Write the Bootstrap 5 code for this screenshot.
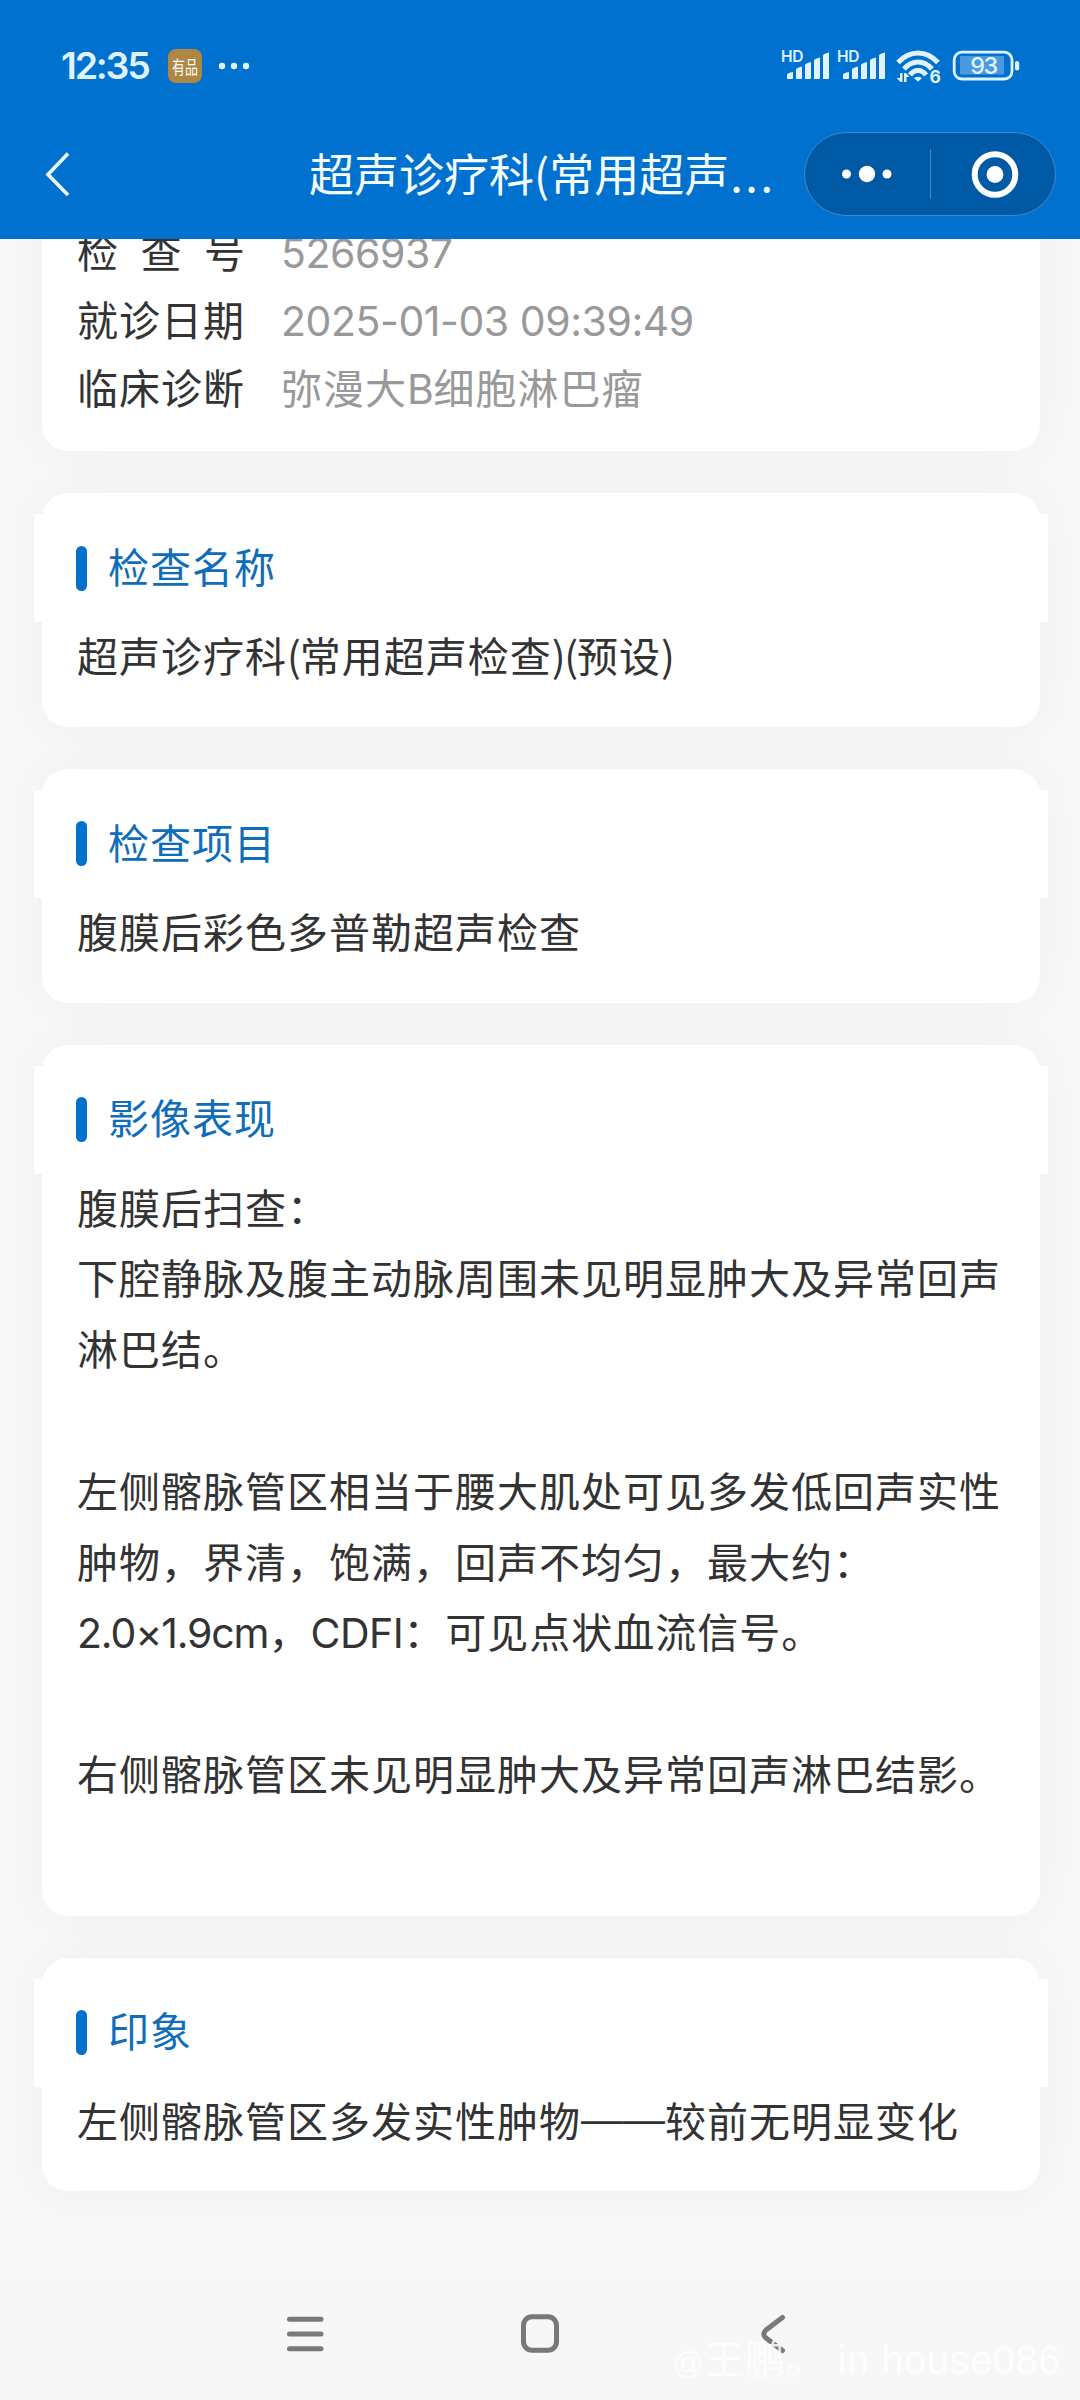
<!DOCTYPE html>
<html lang="zh-CN">
<head>
<meta charset="utf-8">
<meta name="viewport" content="width=device-width, initial-scale=1">
<title>超声诊疗科</title>
<link href="https://cdn.jsdelivr.net/npm/bootstrap@5.3.0/dist/css/bootstrap.min.css" rel="stylesheet">
<style>
body{width:1080px;height:2400px;overflow:hidden;background:#f8f8f8;color:#333;font-family:"Noto Sans CJK SC",sans-serif;font-size:41px;letter-spacing:1px}
.lat{font-family:Inter,"Noto Sans",sans-serif;line-height:1;letter-spacing:-.45px}
.lat-size{letter-spacing:-1.15px}
.app-head{height:239px;background:#0071cf;z-index:2}
.status-row{height:132px;padding:0 60px 0 61px;color:#dff3ff}
.clock{font-size:37.5px;font-weight:600;letter-spacing:-2.2px;width:107px}
.shop-tag{width:34px;height:34px;border-radius:8px;background:#ae8745;color:#fff;overflow:hidden}
.shop-tag span{font-size:13px;line-height:1;letter-spacing:0;transform:scaleY(1.4)}
.title-row{height:84px;padding:0 24px 0 44px}
.page-title{font-size:45px;letter-spacing:0;line-height:82px;height:84px;color:#f4feff;width:495px;margin-left:238px}
.page-title span{letter-spacing:2.6px;margin-left:1px}
.capsule{width:252px;height:84px;border-radius:42px;background:#0059a5;border:1px solid #3f88c6}
.scroller{height:2037px;padding:0 40px 0 42px}
.panel{background:#fff;border-radius:26px;box-shadow:0 0 50px rgba(0,0,0,.045);margin-bottom:42px;padding:21px 0 34px}
.panel-info{margin-top:-60px;padding:40px 35px 28px}
.info-row{height:68px;line-height:62px}
.info-label{width:169px}
.info-value{color:#999;margin-left:35px}
.strip{height:108px;margin:0 -8px;padding:0 42px;background:#fff;color:#0f6dba}
.strip span{padding-bottom:5px}
.tick{width:11px;height:45px;border-radius:6px;background:#0071cf;margin-right:21px}
.report{line-height:70.8px;padding:0 35px;white-space:pre-line;margin-top:-3px;margin-bottom:3px}
.par{letter-spacing:-1.2px}
.dash{font-family:"Liberation Sans",sans-serif;font-size:42px;letter-spacing:0;line-height:0;vertical-align:4px}
.nav-sys{height:124px;background:#f7f7f7}
.stamp{right:19px;bottom:8px;color:#fff;opacity:.85;font-family:"Liberation Sans","Noto Sans CJK SC",sans-serif;font-size:40px;line-height:56px;letter-spacing:.5px;white-space:pre}
.stamp span{font-size:31px}
</style>
<script src="https://cdn.jsdelivr.net/npm/bootstrap@5.3.0/dist/js/bootstrap.bundle.min.js"></script>
</head>
<body class="position-relative">
<header class="app-head position-relative">
  <div class="status-row d-flex align-items-center">
    <div class="clock lat">12:35</div>
    <div class="shop-tag d-flex align-items-center justify-content-center"><span>有品</span></div>
    <svg class="ms-3" width="34" height="10" fill="#dff3ff"><circle cx="4" cy="5" r="3.2"/><circle cx="16" cy="5" r="3.2"/><circle cx="28" cy="5" r="3.2"/></svg>
    <svg class="ms-auto" width="240" height="40" viewBox="780 46 240 40" fill="#dff3ff">
      <defs><g id="sig"><text x="781" y="62" font-family="Inter" font-size="15.5" font-weight="600" letter-spacing="-.2">HD</text>
      <path d="M787 79v-4q0-2 6-3v6q0 1-1 1zM796 79V69.500q0-1.500 6-3v11.500q0 1-1 1zM805 79V65q0-1.500 6-3v16q0 1-1 1zM814 79V60.500q0-1.500 6-3v20.500q0 1-1 1zM823 79V55.500q0-1.500 6-3v25.500q0 1-1 1z"/></g></defs>
      <use href="#sig"/><use href="#sig" x="56"/>
      <g fill="none" stroke="#dff3ff" stroke-width="5"><path d="M898 62.500Q907 53 918 53T938 62.500"/><path d="M904 69Q910 62 918 62T932 69"/><path d="M910 75Q913 70.500 918 70.500T926 75"/></g>
      <path d="M914 78q4-2.500 8 0l-4 3.700z"/>
      <path d="M902.500 73v9h-2l-4-4h3.500v-5zM904 82v-9h2l3.500 4h-3v5z"/>
      <text x="929.500" y="82.500" font-family="Inter" font-size="17.500" font-weight="700" stroke="#0071cf" stroke-width="3" paint-order="stroke">6</text>
      <rect x="954.200" y="52.200" width="57.800" height="26.800" rx="7.500" fill="none" stroke="#dff3ff" stroke-width="2.800"/>
      <rect x="960" y="56" width="44" height="18.500" rx="1" fill="#4b9ae0"/>
      <rect x="1015" y="61" width="4.200" height="9.500" rx="2"/>
      <text x="983.500" y="74.300" text-anchor="middle" font-family="Inter" font-size="23.500" font-weight="500" letter-spacing="-1.500">93</text>
    </svg>
  </div>
  <div class="title-row d-flex align-items-center">
    <svg width="27" height="48" fill="none" stroke="#effcff" stroke-width="3.600"><path d="M24 3.500 4 24.500 24 45"/></svg>
    <div class="page-title text-nowrap">超声诊疗科(常用超声<span>...</span></div>
    <div class="capsule d-flex">
      <svg width="250" height="82" fill="#fff"><circle cx="41.500" cy="41" r="4.500"/><circle cx="62" cy="41" r="8.200"/><circle cx="82" cy="41" r="4.500"/><path d="M125.500 16v50" stroke="#3f88c6"/><circle cx="190" cy="41.500" r="20.300" fill="none" stroke="#fff" stroke-width="6"/><circle cx="190" cy="41.500" r="8.400"/></svg>
    </div>
  </div>
</header>
<main class="scroller overflow-hidden d-flex flex-column">
  <section class="panel panel-info">
    <div class="info-row d-flex"><div class="info-label d-flex justify-content-between"><span>检</span><span>查</span><span>号</span></div><div class="info-value"><span class="lat">5266937</span></div></div>
    <div class="info-row d-flex"><div class="info-label">就诊日期</div><div class="info-value"><span class="lat">2025-01-03 09:39:49</span></div></div>
    <div class="info-row d-flex"><div class="info-label">临床诊断</div><div class="info-value">弥漫大<span class="lat">B</span>细胞淋巴瘤</div></div>
  </section>
  <section class="panel">
    <div class="strip d-flex align-items-center"><i class="tick"></i><span>检查名称</span></div>
    <div class="report">超声诊疗科<span class="par">(</span>常用超声检查<span class="par">)(</span>预设<span class="par">)</span></div>
  </section>
  <section class="panel">
    <div class="strip d-flex align-items-center"><i class="tick"></i><span>检查项目</span></div>
    <div class="report">腹膜后彩色多普勒超声检查</div>
  </section>
  <section class="panel">
    <div class="strip d-flex align-items-center"><i class="tick"></i><span>影像表现</span></div>
    <div class="report">腹膜后扫查：
下腔静脉及腹主动脉周围未见明显肿大及异常回声
淋巴结。

左侧髂脉管区相当于腰大肌处可见多发低回声实性
肿物，界清，饱满，回声不均匀，最大约：
<span class="lat lat-size">2.0×1.9cm</span>，<span class="lat">CDFI</span>：可见点状血流信号。

右侧髂脉管区未见明显肿大及异常回声淋巴结影。
&nbsp;</div>
  </section>
  <section class="panel">
    <div class="strip d-flex align-items-center"><i class="tick"></i><span>印象</span></div>
    <div class="report">左侧髂脉管区多发实性肿物<span class="dash">——</span>较前无明显变化</div>
  </section>
</main>
<nav class="nav-sys">
  <svg width="1080" height="124" fill="none" stroke="#797979" stroke-width="5" stroke-linecap="round"><path d="M289.500 43.300h31.500M289.500 58h31.500M289.500 72.700h31.500"/><rect x="523.500" y="40.800" width="33" height="33.500" rx="8.500"/><path d="M782.500 41.500 766 54q-4.500 4 0 8l16.500 12.500"/></svg>
</nav>
<div class="stamp position-absolute"><span>@</span>王鹏。 in house086</div>
</body>
</html>
